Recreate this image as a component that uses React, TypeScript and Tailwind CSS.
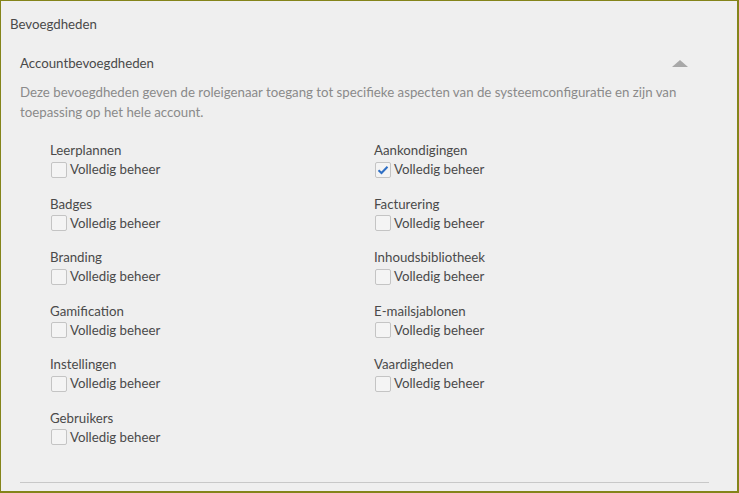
const left = ["Leerplannen", "Badges", "Branding", "Gamification", "Instellingen", "Gebruikers"];
const right = ["Aankondigingen", "Facturering", "Inhoudsbibliotheek", "E-mailsjablonen", "Vaardigheden"];

function Permission({ label, checked }: { label: string; checked?: boolean }) {
  return (
    <div className="h-[53.5px]">
      <div className="h-[19px] leading-[19px]">{label}</div>
      <label className="flex items-center h-[19px] leading-[19px]">
        <span className="w-4 h-4 ml-px mr-[3px] border border-[#c4c4c4] rounded-[2px] bg-[#f4f4f4] flex items-center justify-center">
          {checked && (
            <svg width="12" height="10" viewBox="0 0 12 10">
              <path d="M1.5 5.2 L4.5 8 L10.5 1.8" fill="none" stroke="#2f6fc4" strokeWidth="2" />
            </svg>
          )}
        </span>
        Volledig beheer
      </label>
    </div>
  );
}

export default function App() {
  return (
    <div
      className="w-[739px] h-[493px] bg-[#efefef] border-t border-l border-r-2 border-b-2 border-[#84841a] text-[13.25px] text-[#4a4a4a] overflow-hidden"
      style={{ fontFamily: '"Lato", "Open Sans", sans-serif' }}
    >
      <div className="pl-[9px] pt-[14px] h-[19px] leading-[19px] box-content">Bevoegdheden</div>
      <div className="ml-[19px] mr-[28px] mt-[20px]">
        <div className="flex items-center justify-between h-[19px]">
          <span className="leading-[19px]">Accountbevoegdheden</span>
          <span className="mr-[21px] w-0 h-0 border-l-[8px] border-r-[8px] border-b-[7px] border-l-transparent border-r-transparent border-b-[#a8a8a8]" />
        </div>
        <p className="mt-[9px] text-[#8a8a8a] leading-[20px]">
          Deze bevoegdheden geven de roleigenaar toegang tot specifieke aspecten van de systeemconfiguratie en zijn van
          toepassing op het hele account.
        </p>
        <div className="grid grid-cols-[324px_1fr] pl-[30px] mt-[19px]">
          <div>
            {left.map((l) => (
              <Permission key={l} label={l} />
            ))}
          </div>
          <div>
            {right.map((r) => (
              <Permission key={r} label={r} checked={r === "Aankondigingen"} />
            ))}
          </div>
        </div>
        <div className="mt-[20px] border-t border-[#c8c8c8]" />
      </div>
    </div>
  );
}
